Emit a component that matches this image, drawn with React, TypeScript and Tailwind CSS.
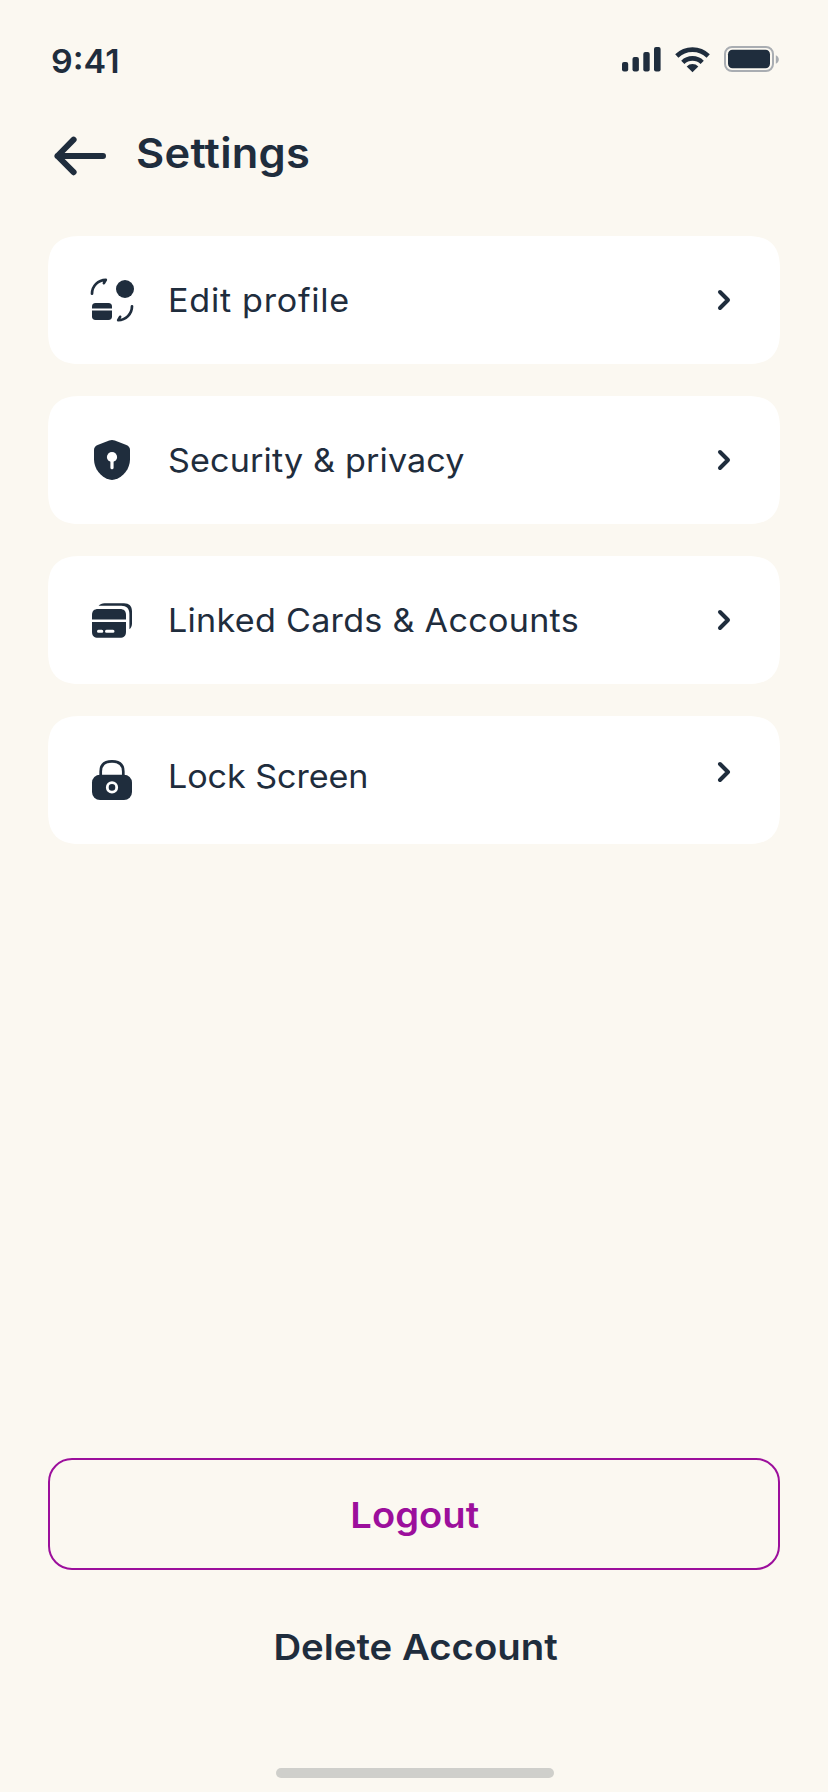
import type { ReactNode } from 'react'

function StatusBar() {
    return (
        <div className="flex h-[118px] items-start justify-between pl-[51px] pr-12 pt-10">
            <span className="mt-px origin-left scale-x-[1.03] text-[33px] font-semibold leading-[41px]">9:41</span>
            <svg width="158" height="40" viewBox="0 0 158 40" fill="currentColor">
                {/* Signal */}
                <rect x="0" y="22" width="6.2" height="9.6" rx="2" />
                <rect x="10.5" y="17" width="6.4" height="14.6" rx="2" />
                <rect x="21.3" y="12" width="6.4" height="19.6" rx="2" />
                <rect x="32" y="7" width="6.6" height="24.6" rx="2" />
                {/* Wi-Fi */}
                <g fill="none" stroke="currentColor" strokeWidth="4.6">
                    <path d="M54.8 16a22.5 22.5 0 0 1 31.4 0" />
                    <path d="M60.8 22.3a14 14 0 0 1 19.4 0" />
                </g>
                <path d="M70.5 32.2l-5.8-5.8a8.2 8.2 0 0 1 11.6 0z" />
                {/* Battery */}
                <rect x="103" y="7" width="48" height="24" rx="7" fill="none" stroke="#a9adb2" strokeWidth="2" />
                <rect x="106" y="9.8" width="42" height="18.4" rx="4.5" />
                <path d="M153.8 15.2c4 1.6 4 7 0 8.6z" fill="#a9adb2" />
            </svg>
        </div>
    )
}

function Icon({ children }: { children: ReactNode }) {
    return (
        <svg width="48" height="48" viewBox="0 0 48 48" fill="currentColor" className="shrink-0">
            {children}
        </svg>
    )
}

function ProfileIcon() {
    return (
        <Icon>
            <circle cx="37" cy="13" r="9" />
            <path d="M7.5 27h13c2.3 0 3.5 1.2 3.5 3.5v1.9H4v-1.9C4 28.2 5.2 27 7.5 27z" />
            <path d="M4 34.4h20v6.2c0 2.3-1.2 3.5-3.5 3.5h-13C5.2 44.1 4 42.9 4 40.6z" />
            <g fill="none" stroke="currentColor" strokeWidth="2.7" strokeLinecap="round" strokeLinejoin="round">
                <path d="M4 17.7C4 10 10.2 3.9 17.8 3.8l-1.9 3.4" />
                <path d="M44 30.3c0 7.7-6.2 13.8-13.8 13.9l1.9-3.4" />
            </g>
        </Icon>
    )
}

function ShieldIcon() {
    return (
        <Icon>
            <path d="M21.2 4.5c1.9-.7 3.7-.7 5.6 0l11.6 4.4c2.2.9 3.6 2.7 3.6 5v9.3c0 9.6-6.6 17.7-15.4 20.4-1.8.5-3.4.5-5.2 0C12.6 40.9 6 32.8 6 23.2v-9.3c0-2.3 1.4-4.1 3.6-5z" />
            <circle cx="24" cy="21" r="5.1" fill="#fff" />
            <path d="M24 23v8.7" stroke="#fff" strokeWidth="3.2" strokeLinecap="round" />
        </Icon>
    )
}

function CardsIcon() {
    return (
        <Icon>
            <path d="M10.6 9.8C12 8 14 7.2 16.5 7.2H36c5.2 0 8 2.8 8 8v12.3c0 2.4-.9 4.5-2.6 5.8V18c0-5.4-2.8-8.2-8.2-8.2z" />
            <path d="M10.2 13h21.6c4.2 0 6.2 2 6.2 6v4.5H4V19c0-4 2-6 6.2-6z" />
            <path fillRule="evenodd" d="M4 25.9h34v9.8c0 4-2 6-6.2 6H10.2c-4.2 0-6.2-2-6.2-6zM10.5 33.8a1.5 1.5 0 0 0 0 3h3.3a1.5 1.5 0 0 0 0-3zm8 0a1.5 1.5 0 0 0 0 3H25a1.5 1.5 0 0 0 0-3z" />
        </Icon>
    )
}

function LockIcon() {
    return (
        <Icon>
            <path d="M12.7 20v-4.5c0-6.5 3.7-10.2 11.3-10.2s11.3 3.7 11.3 10.2V20" fill="none" stroke="currentColor" strokeWidth="2.7" />
            <rect x="4" y="18.7" width="40" height="25.3" rx="8" />
            <circle cx="24" cy="31.4" r="4.7" fill="none" stroke="#fff" strokeWidth="2.8" />
        </Icon>
    )
}

const items = [
    { label: 'Edit profile', icon: <ProfileIcon />, text: 'mt-0.5 tracking-[0.7px]', arrow: '' },
    { label: 'Security & privacy', icon: <ShieldIcon />, text: 'mt-0.5 tracking-[0.14px]', arrow: '' },
    { label: 'Linked Cards & Accounts', icon: <CardsIcon />, text: 'mt-0.5 tracking-[0.26px]', arrow: '' },
    { label: 'Lock Screen', icon: <LockIcon />, text: 'mb-1.5 tracking-[-0.07px]', arrow: 'mb-4' },
]

export default function App() {
    return (
        <div className="flex h-[1792px] w-[828px] flex-col bg-[#fbf8f1] font-['Inter',sans-serif] text-[#1f2d3d]">
            <StatusBar />

            {/* Header */}
            <header className="flex h-[118px] items-start pl-12">
                <svg width="64" height="64" viewBox="0 0 64 64" fill="none" stroke="currentColor" strokeWidth="6" strokeLinecap="round" strokeLinejoin="round" className="mt-1.5">
                    <path d="M9.5 32H55M25.6 15.6L9.5 32l16.1 16.2" />
                </svg>
                <h1 className="ml-6 mt-[9px] origin-left scale-x-[1.06] text-[41px] font-semibold leading-[52px] tracking-[0.2px]">Settings</h1>
            </header>

            {/* Menu */}
            <ul className="flex flex-col gap-8 px-12">
                {items.map((item) => (
                    <li key={item.label} className="flex h-32 items-center rounded-[34px] bg-white pl-10 pr-8 [corner-shape:superellipse(1.4)]">
                        {item.icon}
                        <span className={`ml-8 origin-left scale-x-[1.05] whitespace-nowrap text-[32.5px] leading-10 ${item.text}`}>{item.label}</span>
                        <svg width="48" height="48" viewBox="0 0 48 48" fill="none" stroke="currentColor" strokeWidth="4" strokeLinecap="round" strokeLinejoin="round" className={`ml-auto ${item.arrow}`}>
                            <path d="M20 16l8 8-8 8" />
                        </svg>
                    </li>
                ))}
            </ul>

            {/* Actions */}
            <div className="mt-auto flex flex-col items-center px-12 pb-[14px]">
                <button className="h-28 w-full rounded-3xl border-2 border-[#9c0f9c] pl-0.5 pt-0.5 text-[36px] font-semibold text-[#9c0f9c]">
                    <span className="inline-block scale-x-[1.06]">Logout</span>
                </button>
                <button className="mt-[53px] h-12 scale-x-[1.065] whitespace-nowrap pl-0.5 text-[36px] font-semibold leading-[48px]">Delete Account</button>
                <div className="ml-0.5 mt-[97px] h-2.5 w-[278px] rounded-full bg-[#cfcfcb]" />
            </div>
        </div>
    )
}
